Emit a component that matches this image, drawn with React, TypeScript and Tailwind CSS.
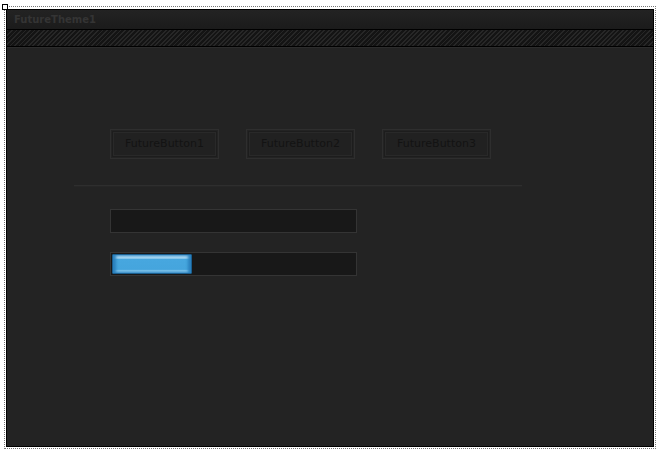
const BUTTONS = ["FutureButton1", "FutureButton2", "FutureButton3"];

function FutureButton({ label }: { label: string }) {
  return (
    <div className="w-[109px] h-[30px] border border-[#2e2e2e] p-px">
      <div className="flex h-full w-full items-center justify-center border border-[#1d1d1d] bg-[#212121] text-[11px] text-[#131313] shadow-[inset_0_0_0_1px_#292929]">
        {label}
      </div>
    </div>
  );
}

function ProgressBar({ value }: { value: number }) {
  return (
    <div className="h-[24px] w-[247px] border border-[#343434] bg-[#181818] p-px">
      {value > 0 && (
        <div
          className="h-full rounded-[1px] border border-[#1a5e8e] bg-[linear-gradient(to_bottom,#a9d6f1_0%,#a9d6f1_18%,#47a7df_22%,#45a5dd_80%,#7cc0e9_85%,#7cc0e9_100%)] shadow-[inset_3px_0_3px_#2a80bd,inset_-3px_0_3px_#2a80bd]"
          style={{ width: `${value}%` }}
        />
      )}
    </div>
  );
}

export default function App() {
  return (
    <div
      className="relative h-[455px] w-[662px] overflow-hidden bg-white pl-[4px] pt-[6px]"
      style={{ fontFamily: '"DejaVu Sans", Verdana, sans-serif' }}
    >
      <div className="absolute left-[2px] top-[4px] z-10 h-[6px] w-[6px] border border-black bg-white" />
      <div className="h-[443px] w-[652px] border border-dotted border-[#777] pl-px pt-[2px]">
        <div className="flex h-[438px] w-[648px] flex-col border border-black bg-[#232323]">
          <div className="flex h-[20px] items-center border-b border-black bg-[linear-gradient(to_bottom,#232323,#1b1b1b)] pl-[7px] text-[10px] font-bold text-[#343434]">
            FutureTheme1
          </div>
          <div className="h-[17px] border-b border-black bg-[repeating-linear-gradient(135deg,#272727_0px,#272727_1.3px,#141414_1.3px,#141414_3.2px)]" />
          <div className="flex flex-1 flex-col border-t border-[#2c2c2c] pl-[103px] pt-[81px]">
            <div className="flex gap-[27px]">
              {BUTTONS.map((b) => (
                <FutureButton key={b} label={b} />
              ))}
            </div>
            <div className="-ml-[36px] mt-[26px] h-[2px] w-[448px] border-t border-[#2e2e2e] border-b-[#262626] border-b" />
            <div className="mt-[22px] flex flex-col gap-[19px]">
              <ProgressBar value={0} />
              <ProgressBar value={33} />
            </div>
          </div>
        </div>
      </div>
    </div>
  );
}
